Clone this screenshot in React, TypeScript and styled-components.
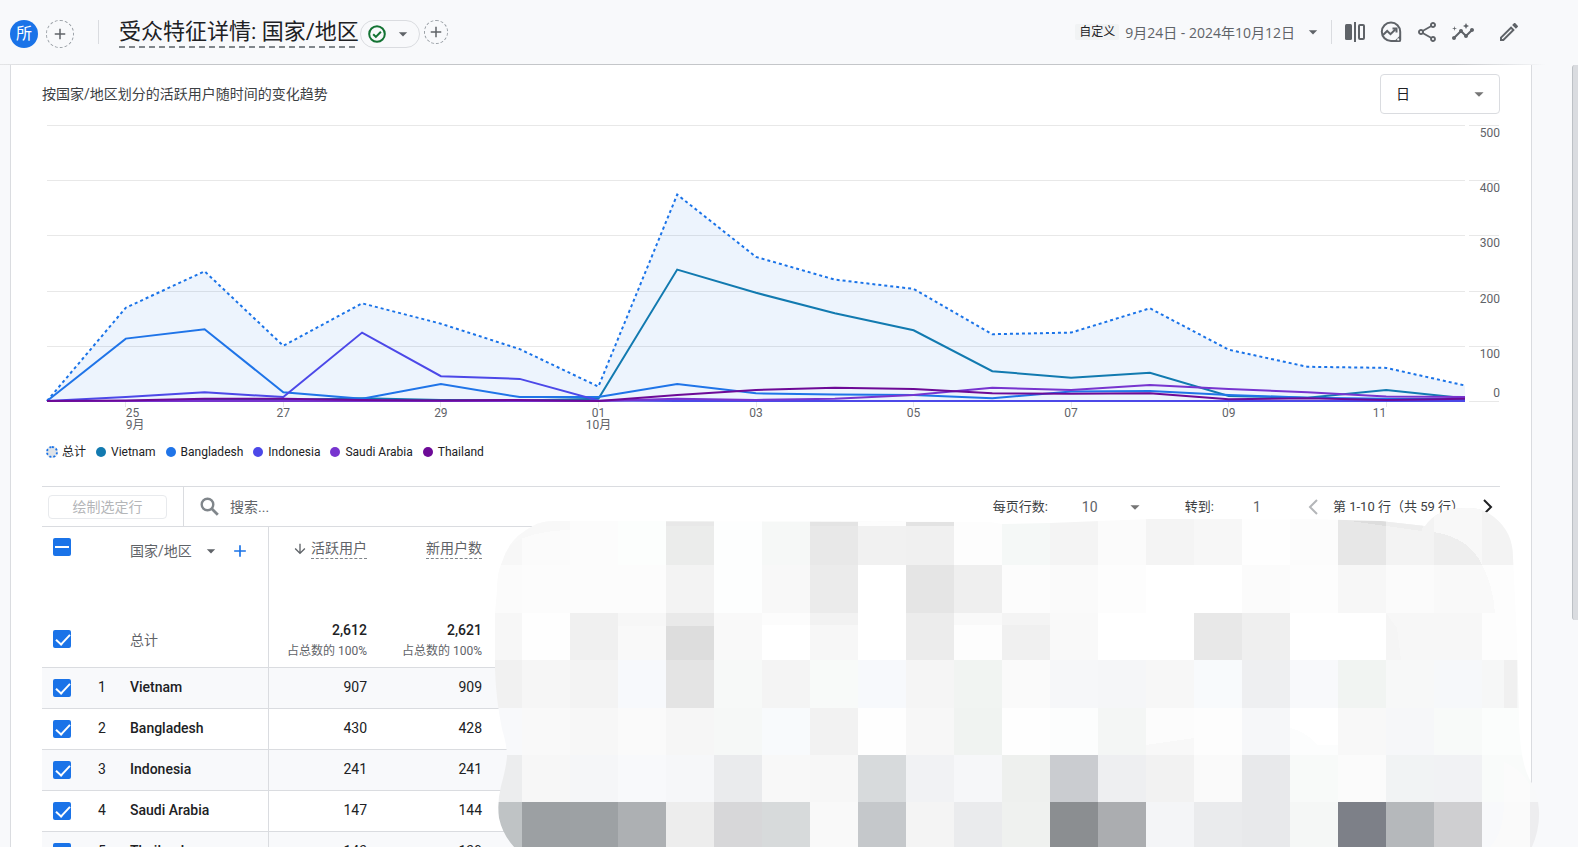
import React, { useLayoutEffect, useRef, useState } from "react";
import styled, { createGlobalStyle } from "styled-components";
import {
  MdAdd,
  MdArrowDownward,
  MdArrowDropDown,
  MdInsights,
  MdOutlineEdit,
  MdOutlineShare,
} from "react-icons/md";

const color = {
  text: "#202124",
  muted: "#5f6368",
  line: "#dadce0",
  grid: "#e8e8e8",
  page: "#f8f9fb",
  blue: "#1a73e8",
};

const GlobalStyle = createGlobalStyle`
  * { box-sizing: border-box; }
  body {
    margin: 0;
    background: ${color.page};
    color: ${color.text};
    font-family: Roboto, "Noto Sans CJK SC", sans-serif;
    font-size: 14px;
    line-height: 20px;
  }
  button, input, select { font: inherit; color: inherit; margin: 0; }
  button { cursor: pointer; }
`;

const Shell = styled.div`
  height: 100vh;
  display: flex;
  flex-direction: column;
  overflow: hidden;
`;

/* ---------- header ---------- */

const Header = styled.header`
  flex: none;
  display: flex;
  align-items: flex-start;
  height: 65px;
  padding: 20px 57px 0 10px;
  background:
    linear-gradient(90deg, #e4e5e7, #c4c6c9 8%, #c4c6c9 92%, ${color.page} 98%) bottom / 100% 1px no-repeat,
    ${color.page};
`;

const Avatar = styled.span`
  display: grid;
  place-items: center;
  width: 28px;
  height: 28px;
  border-radius: 50%;
  background: ${color.blue};
  color: #fff;
  font-size: 16px;
`;

const DashedButton = styled.button<{ $size: number }>`
  display: grid;
  place-items: center;
  width: ${(p) => p.$size}px;
  height: ${(p) => p.$size}px;
  padding: 0;
  border: 1px dashed #9aa0a6;
  border-radius: 50%;
  background: none;
  color: ${color.muted};
  font-size: 18px;
`;

const Divider = styled.span`
  width: 1px;
  height: 24px;
  background: ${color.line};
`;

const HeaderLeft = styled.div`
  display: flex;
  align-items: flex-start;
  flex: 1;
  min-width: 0;

  ${Avatar} { margin-right: 8px; }
  ${Divider} { margin: 0 20px 0 24px; }
`;

const Title = styled.h1`
  margin: 0 1px 0 0;
  height: 28px;
  font-size: 22px;
  font-weight: 400;
  line-height: 24px;
  white-space: nowrap;
  background: repeating-linear-gradient(90deg, #80868b 0 6px, transparent 6px 10px) bottom / 100% 2px no-repeat;
`;

const StatusButton = styled.button`
  display: flex;
  align-items: center;
  justify-content: space-between;
  width: 60px;
  height: 28px;
  margin-right: 4px;
  padding: 0 6px 0 7px;
  border: 1px solid ${color.line};
  border-radius: 14px;
  background: none;
  color: ${color.muted};
  font-size: 20px;
`;

const HeaderRight = styled.div`
  display: flex;
  align-items: center;
  height: 24px;
`;

const DateButton = styled.button`
  display: flex;
  align-items: center;
  padding: 0;
  border: 0;
  background: none;
  color: ${color.muted};
  white-space: nowrap;

  svg { margin: 0 8px; font-size: 20px; }
`;

const DateText = styled.span`
  padding-top: 2px;
  font-family: "Open Sans", "Noto Sans CJK SC", sans-serif;
`;

const Chip = styled.span`
  margin-right: 6px;
  padding: 0 4px;
  border-radius: 2px;
  background: #f1f3f4;
  color: ${color.text};
  font-size: 12px;
  line-height: 16px;
`;

const IconButton = styled.button<{ $gap?: number }>`
  display: grid;
  place-items: center;
  width: 24px;
  height: 24px;
  margin-left: ${(p) => p.$gap ?? 12}px;
  padding: 0;
  border: 0;
  background: none;
  color: ${color.muted};
  font-size: 24px;
`;

/* ---------- body ---------- */

const Body = styled.main`
  flex: 1;
  min-height: 0;
  display: flex;
  overflow: hidden;
`;

const Card = styled.section`
  flex: 1;
  min-width: 0;
  align-self: flex-start;
  margin: 0 40px 0 10px;
  padding: 9px 31px 0;
  border: solid ${color.line};
  border-width: 0 1px;
  background: #fff;
`;

const ScrollThumb = styled.div`
  flex: none;
  width: 6px;
  height: 71%;
  border-left: 1px solid #bdc1c6;
  border-radius: 3px 0 0 3px;
  background: ${color.line};
`;

const CardHead = styled.div`
  display: flex;
  justify-content: space-between;
  height: 40px;
`;

const CardTitle = styled.h2`
  margin: 0;
  color: #3c4043;
  font-size: 14px;
  font-weight: 400;
  line-height: 40px;
`;

const SelectBox = styled.label<{ $outlined?: boolean }>`
  display: flex;
  align-items: center;
  width: ${(p) => (p.$outlined ? 120 : 64)}px;
  height: ${(p) => (p.$outlined ? 40 : 24)}px;
  padding: ${(p) => (p.$outlined ? "0 9px 0 15px" : "0")};
  border: ${(p) => (p.$outlined ? `1px solid ${color.line}` : "0")};
  border-radius: 4px;
  color: ${(p) => (p.$outlined ? color.text : color.muted)};

  select {
    flex: 1;
    min-width: 0;
    padding: 0;
    border: 0;
    background: none;
    appearance: none;
  }
  svg { flex: none; font-size: 22px; color: #757575; }
`;

const ChartFrame = styled.div`
  height: 328px;

  svg { display: block; width: 100%; height: 100%; }
  text { font-size: 12px; fill: ${color.muted}; }
`;

const Legend = styled.ul`
  display: flex;
  gap: 10px;
  margin: 0 0 24px;
  padding: 0 0 0 5px;
  list-style: none;
  font-size: 12px;
`;

const LegendItem = styled.li`
  display: flex;
  align-items: center;
  gap: 5px;
`;

const Dot = styled.span<{ $color?: string }>`
  width: ${(p) => (p.$color ? 10 : 12)}px;
  height: ${(p) => (p.$color ? 10 : 12)}px;
  margin: ${(p) => (p.$color ? "0" : "0 -1px")};
  border-radius: 50%;
  background: ${(p) => p.$color ?? "#dfe3e8"};
  border: ${(p) => (p.$color ? "0" : `2px dotted ${color.blue}`)};
`;

/* ---------- table ---------- */

const TableArea = styled.div`
  position: relative;
`;

const Toolbar = styled.div`
  display: flex;
  align-items: center;
  height: 41px;
  border: solid ${color.line};
  border-width: 1px 0;
  color: #3c4043;
`;

const PlotCell = styled.div`
  display: flex;
  align-items: center;
  align-self: stretch;
  width: 142px;
  padding-left: 6px;
  border-right: 1px solid ${color.line};
`;

const PlotButton = styled.button`
  width: 119px;
  height: 24px;
  padding: 0;
  border: 1px solid #e8eaed;
  border-radius: 4px;
  background: none;
  color: #b4b6b9;
  line-height: 22px;
`;

const SearchBox = styled.label`
  display: flex;
  align-items: center;
  flex: 1;
  gap: 8px;
  padding-left: 14px;

  svg { color: #80868b; }
  input {
    width: 160px;
    padding: 0;
    border: 0;
    background: none;
    outline: 0;
  }
  input::placeholder { color: ${color.muted}; opacity: 1; }
`;

const Pager = styled.div`
  display: flex;
  align-items: center;
  font-size: 13px;

  ${SelectBox} { margin: 0 39px 0 34px; font-size: 14px; }
`;

const PageInput = styled.input`
  width: 16px;
  margin: 0 32px 0 39px;
  padding: 0;
  border: 0;
  background: none;
  color: ${color.muted};
  font-size: 14px;
`;

const PagerButton = styled.button`
  display: grid;
  place-items: center;
  width: 24px;
  height: 24px;
  padding: 0;
  border: 0;
  background: none;
  color: ${color.text};

  &:disabled { color: #b4b6b9; }
`;

const PageRange = styled.span`
  width: 131px;
  margin: 0 12px 0 8px;
  white-space: nowrap;
`;

const Table = styled.table`
  width: 100%;
  table-layout: fixed;
  border-collapse: separate;
  border-spacing: 0;

  th, td { padding: 0; font-weight: 400; text-align: left; }
`;

const Col = styled.col<{ $w?: number }>`
  width: ${(p) => (p.$w ? `${p.$w}px` : "auto")};
`;

const HeadRow = styled.tr`
  height: 86px;
  vertical-align: top;
  color: ${color.muted};

  && th { padding-top: 11px; }
`;

const Row = styled.tr<{ $total?: boolean; $shaded?: boolean }>`
  height: ${(p) => (p.$total ? 55 : 41)}px;
  background: ${(p) => (p.$shaded ? color.page : "#fff")};

  td, th { border-bottom: 1px solid ${color.line}; }
  &&& > :not(:first-child) { padding-bottom: ${(p) => (p.$total ? 0 : 2)}px; }
  &&& > :first-child { padding-bottom: ${(p) => (p.$total ? 2 : 0)}px; }
`;

const CheckCell = styled.td`
  && { padding-left: 11px; }
`;

const Check = styled.input.attrs({ type: "checkbox" })<{ $mixed?: boolean }>`
  display: block;
  position: relative;
  width: 18px;
  height: 18px;
  appearance: none;
  border: 2px solid ${color.muted};
  border-radius: 2px;

  &:checked { border: 0; background: ${color.blue}; }
  &:checked::after {
    content: "";
    position: absolute;
    ${(p) =>
      p.$mixed
        ? "left: 2px; top: 8px; width: 14px; height: 2px; background: #fff;"
        : "left: 6px; top: 1px; width: 6px; height: 12px; border: solid #fff; border-width: 0 2px 2px 0; transform: rotate(43deg);"}
  }
`;

const IndexCell = styled.td`
  && { padding-left: 8px; }
`;

const NameCell = styled.th<{ $strong?: boolean }>`
  border-right: 1px solid ${color.line};
  color: ${(p) => (p.$strong ? color.text : color.muted)};
  && { font-weight: ${(p) => (p.$strong ? 500 : 400)}; }
`;

const NumberCell = styled.td`
  && { padding-right: 16px; text-align: right; }
`;

const DimensionHead = styled.div`
  display: flex;
  align-items: center;
  height: 26px;

  select { padding: 0; border: 0; background: none; appearance: none; }
  > svg { margin-left: 9px; font-size: 20px; }
`;

const AddButton = styled.button`
  display: grid;
  place-items: center;
  width: 20px;
  height: 20px;
  margin-left: 9px;
  padding: 0;
  border: 0;
  background: none;
  color: ${color.blue};
  font-size: 20px;
`;

const MetricButton = styled.button`
  display: inline-flex;
  align-items: center;
  gap: 3px;
  padding: 0;
  border: 0;
  background: none;

  svg { font-size: 16px; }
  span { border-bottom: 1px dashed #80868b; }
`;

const TotalValue = styled.div`
  padding-top: 2px;
  font-weight: 500;
  line-height: 20px;
  color: ${color.text};
`;

const TotalShare = styled.div`
  font-size: 12px;
  line-height: 22px;
  color: ${color.muted};
`;

const Mosaic = styled.svg`
  position: absolute;
  top: 14px;
  left: 432px;
  width: calc(100% - 386px);
  height: 349px;
  pointer-events: none;
`;

/* ---------- data ---------- */

const totals = [0, 169, 235, 100, 177, 140, 94, 26, 374, 261, 220, 203, 121, 124, 168, 93, 62, 60, 28];

const series = [
  { name: "Vietnam", color: "#127ab0", values: [0, 0, 2, 2, 5, 2, 1, 4, 238, 196, 159, 128, 54, 42, 51, 9, 6, 20, 5] },
  { name: "Bangladesh", color: "#1f74e8", values: [0, 113, 130, 16, 4, 31, 7, 7, 31, 14, 12, 11, 5, 17, 18, 11, 6, 4, 3] },
  { name: "Indonesia", color: "#4c48e8", values: [0, 7, 16, 7, 124, 45, 40, 1, 0, 0, 0, 0, 0, 0, 0, 0, 0, 0, 0] },
  { name: "Saudi Arabia", color: "#7734cf", values: [0, 0, 0, 0, 0, 0, 0, 0, 4, 2, 4, 11, 24, 20, 29, 22, 16, 8, 7] },
  { name: "Thailand", color: "#6d0a97", values: [0, 1, 4, 4, 2, 1, 2, 0, 11, 20, 24, 22, 14, 13, 14, 3, 5, 2, 4] },
];

const dayLabels = [
  { day: 1, text: "25", month: "9月", anchor: "start" },
  { day: 3, text: "27", anchor: "middle" },
  { day: 5, text: "29", anchor: "middle" },
  { day: 7, text: "01", month: "10月", anchor: "middle" },
  { day: 9, text: "03", anchor: "middle" },
  { day: 11, text: "05", anchor: "middle" },
  { day: 13, text: "07", anchor: "middle" },
  { day: 15, text: "09", anchor: "middle" },
  { day: 17, text: "11", anchor: "end" },
] as const;

const rows = [
  ["Vietnam", 907, 909],
  ["Bangladesh", 430, 428],
  ["Indonesia", 241, 241],
  ["Saudi Arabia", 147, 144],
  ["Thailand", 143, 139],
] as const;

const mosaicEdges = [500, 565, 613, 660, 708, 755, 802, 849];
const mosaicTones = [
  "f7f7f7 fbfbfb fcfcfc fcfefd ebeceb fdfefe f6f8f7 e8e8e8 f1f1f1 f0f0f0 fdfdfd f5f8f7 f4f4f4 fbfbfb f4f4f4 f7f7f7 fefefe fcfcfc e7e7e7 f3f3f3 eeeeee f3f3f3 ffffff",
  "fbfbfb fcfcfc fcfcfc fcfcfc f3f3f3 fdfefe f8f8f8 ebebeb ffffff e5e5e5 efefef fcfcfc fafafa fdfdfd ffffff ffffff fbfbfb fdfdfd f7f7f7 fbfbfb f9f9f9 fdfdfd ffffff",
  "f7f7f7 fefefe f0f0f0 f9f9f9 dddddd f9f9f9 ffffff f7f7f7 ffffff ececec fdfdfd f0f0f0 f9f9f9 ffffff ffffff e8e8e8 efefef ffffff ffffff f7f7f7 f7f7f7 fdfdfd ffffff",
  "f1f1f1 f6f6f6 f3f3f3 f7f9fc e4e4e4 f7f9f8 f4f4f4 f8faf9 f7f9fc f5f5f5 f1f4f2 fafafa f6f7f9 f5f6f8 f7f7f7 f8fafc eeeff1 f8f9fb f1f4f2 f7f8f8 f6f8fa f6f7f7 ffffff",
  "f8f9fb f9f9f9 f7f7f7 fafafa f6f6f6 f6f8f7 f8fafc f2f2f2 fefefe f7f7f7 f0f3f1 fefefe fcfdfd f4f6f5 fcfcfc fdfdfd f6f7f9 ffffff f8f8f8 f6f7f9 f8faf9 fbfdfc ffffff",
  "ecedee f7f7f7 f5f6f8 f8f9fb f6f7f9 eaebed f8f8f8 f7f7f7 d7dadc f1f2f4 f6f7f9 eef0ee caccd0 eeeff1 f2f2f2 fafafa e8e9eb f8faf9 fbfbfb f1f3f4 f1f2f4 f9fbfa f8f9fa",
  "bfc3c5 9ca0a3 9da1a4 adb0b3 ededed d7d7d9 d7dadb f9f9f9 c5c8cb f4f4f4 eaebed eff1ef 8b8e91 abadb0 f4f5f7 eaebed e8e9eb f5f7f6 7d8088 b5b8bb cfcfd1 f8f9fb ededef",
].map((line) => line.split(" "));

/* ---------- parts ---------- */

function CompareIcon() {
  return (
    <svg width="24" height="24" viewBox="0 0 24 24" fill="currentColor" aria-hidden="true">
      <rect x="2" y="4" width="7" height="16" rx="1.5" />
      <rect x="11" y="2" width="2" height="20" />
      <rect x="16" y="5" width="5" height="14" rx="1" fill="none" stroke="currentColor" strokeWidth="2" />
    </svg>
  );
}

function TrendCircleIcon() {
  return (
    <svg width="24" height="24" viewBox="0 0 24 24" fill="none" stroke="currentColor" strokeWidth="2" aria-hidden="true">
      <path d="M12 21a9.2 9.2 0 1 1 9.2-9.2V20a1 1 0 0 1-1 1z" />
      <path d="M4 15l4.2-4 3.3 3.2 5-5" />
      <path d="M13.5 8.5h4v4" />
      <path d="M21.5 15v6.5H15z" fill="currentColor" stroke="none" />
      <circle cx="19.2" cy="19.4" r="1.1" fill="#f8f9fb" stroke="none" />
    </svg>
  );
}

function StatusIcon() {
  return (
    <svg width="18" height="18" viewBox="0 0 18 18" fill="none" stroke="#137333" strokeWidth="2" aria-hidden="true">
      <circle cx="9" cy="9" r="7.8" />
      <path d="M5.2 9.2l2.7 2.7 5-5.2" />
    </svg>
  );
}

function SearchIcon() {
  return (
    <svg width="24" height="24" viewBox="0 0 24 24" fill="none" stroke="currentColor" aria-hidden="true">
      <circle cx="9.5" cy="9.5" r="5.8" strokeWidth="2.4" />
      <path d="M13.8 13.8l6 6" strokeWidth="2.8" />
    </svg>
  );
}

function Chevron({ left }: { left?: boolean }) {
  return (
    <svg width="12" height="16" viewBox="0 0 12 16" fill="none" stroke="currentColor" strokeWidth="2" aria-hidden="true">
      <path d={left ? "M10 1L3 8l7 7" : "M2 1l7 7-7 7"} />
    </svg>
  );
}

function Chart() {
  const frame = useRef<HTMLDivElement>(null);
  const [width, setWidth] = useState(1458);

  useLayoutEffect(() => {
    const el = frame.current;
    if (!el) return;
    const update = () => setWidth(el.clientWidth);
    update();
    const observer = new ResizeObserver(update);
    observer.observe(el);
    return () => observer.disconnect();
  }, []);

  const left = 5;
  const right = width - 35;
  const base = 287;
  const x = (i: number) => left + ((right - left) * i) / 18;
  const y = (v: number) => base - v * 0.552;
  const points = (values: number[]) => values.map((v, i) => `${x(i).toFixed(1)},${y(v).toFixed(1)}`).join(" ");

  return (
    <ChartFrame ref={frame}>
      <svg role="img" aria-label="活跃用户趋势">
        {[0, 100, 200, 300, 400, 500].map((v) => {
          const lineY = Math.round(y(v)) + 0.5;
          return (
            <g key={v}>
              <path d={`M${left} ${lineY}H${right}M${width - 31} ${lineY}H${width - 1}`} stroke={color.grid} />
              <text x={width} y={v === 0 ? 283 : lineY + 11} textAnchor="end">
                {v}
              </text>
            </g>
          );
        })}
        {dayLabels.map((d) => (
          <g key={d.text}>
            <path d={`M${Math.floor(x(d.day)) + 0.5} 288v5`} stroke={color.grid} />
            <text x={x(d.day)} y="303" textAnchor={d.anchor}>
              {d.text}
            </text>
            {"month" in d && (
              <text x={x(d.day)} y="315" textAnchor={d.anchor}>
                {d.month}
              </text>
            )}
          </g>
        ))}
        <polygon
          points={`${left},${base} ${points(totals)} ${right},${base}`}
          fill={color.blue}
          fillOpacity="0.08"
        />
        <polyline points={points(totals)} fill="none" stroke={color.blue} strokeWidth="2" strokeDasharray="3 3" />
        {series.map((s) => (
          <polyline key={s.name} points={points(s.values)} fill="none" stroke={s.color} strokeWidth="2" />
        ))}
      </svg>
    </ChartFrame>
  );
}

function MosaicCover() {
  return (
    <Mosaic viewBox="474 500 1072 349" preserveAspectRatio="none" aria-hidden="true">
      <defs>
        <clipPath id="cover">
          <path d="M620 521H555Q541 521 533 526Q509 538 502 562Q497 572 497 590L495 613V670Q496 700 502 729Q507 745 507 757Q506 768 501 786Q497 802 499 818Q503 836 516 849H1531Q1540 830 1539 810Q1538 792 1529 778Q1520 760 1519 720L1517 640L1513 557Q1513 532 1494 517Q1482 507 1466 508Q1437 508 1425 526L1380 521L1310 519H1150L1050 523L1002 524L990 522Z" />
        </clipPath>
      </defs>
      <g clipPath="url(#cover)" shapeRendering="crispEdges">
        {mosaicTones.map((line, r) =>
          line.map((tone, c) => (
            <rect
              key={`${r}-${c}`}
              x={474 + c * 48}
              y={mosaicEdges[r]}
              width={48}
              height={mosaicEdges[r + 1] - mosaicEdges[r]}
              fill={`#${tone}`}
            />
          ))
        )}
        <rect x="666" y="522" width="48" height="4" fill="#e8e8e8" />
        <rect x="810" y="522" width="48" height="4" fill="#e4e4e4" />
        <rect x="906" y="522" width="48" height="4" fill="#e3e3e3" />
        <rect x="858" y="520" width="48" height="6" fill="#fdfdfd" />
        <rect x="618" y="613" width="48" height="13" fill="#f7f7f7" />
        <rect x="666" y="613" width="48" height="13" fill="#e9e9e9" />
        <rect x="762" y="613" width="48" height="12" fill="#fcfcfc" />
        <rect x="810" y="613" width="48" height="12" fill="#f2f2f2" />
        <rect x="954" y="613" width="48" height="12" fill="#f9f9f9" />
        <rect x="1002" y="613" width="48" height="12" fill="#f4f4f4" />
        <path d="M498 565Q505 532 570 530V517H490V565Z" fill="#f8f8f8" />
        <path d="M1350 521L1386 526V521Z" fill="#dddddd" />
        <path d="M1386 526L1422 531L1425 515H1386Z" fill="#eeeeee" />
        <path d="M1434 500V532Q1470 538 1482 565V500Z" fill="#f8f8f8" />
        <path d="M1482 565Q1493 585 1495 613H1482Z" fill="#f9f9f9" />
        <path d="M1386 613L1397 628L1401 660H1386Z" fill="#f5f5f5" />
        <path d="M1504 660H1517V708H1504Z" fill="#f0f0f0" />
        <path d="M1146 745L1194 738V755H1146Z" fill="#f8f8f8" />
        <path d="M1290 728Q1306 732 1318 745H1338V755H1290Z" fill="#fcfdfd" />
        <path d="M1504 762Q1522 770 1530 785V802H1504Z" fill="#fbfbfb" />
        <path d="M1504 802H1530V849H1488Q1504 835 1504 802Z" fill="#fafafa" />
      </g>
    </Mosaic>
  );
}

export default function App() {
  return (
    <Shell>
      <GlobalStyle />
      <Header>
        <HeaderLeft>
          <Avatar>所</Avatar>
          <DashedButton $size={28} aria-label="添加比较">
            <MdAdd />
          </DashedButton>
          <Divider />
          <Title>受众特征详情: 国家/地区</Title>
          <StatusButton aria-label="数据状态">
            <StatusIcon />
            <MdArrowDropDown />
          </StatusButton>
          <DashedButton $size={24} aria-label="添加过滤条件">
            <MdAdd />
          </DashedButton>
        </HeaderLeft>
        <HeaderRight>
          <DateButton>
            <Chip>自定义</Chip>
            <DateText>9月24日 - 2024年10月12日</DateText>
            <MdArrowDropDown />
          </DateButton>
          <Divider />
          <IconButton $gap={11} aria-label="比较">
            <CompareIcon />
          </IconButton>
          <IconButton aria-label="数据分析">
            <TrendCircleIcon />
          </IconButton>
          <IconButton aria-label="分享">
            <MdOutlineShare />
          </IconButton>
          <IconButton aria-label="洞察">
            <MdInsights />
          </IconButton>
          <IconButton $gap={22} aria-label="修改">
            <MdOutlineEdit />
          </IconButton>
        </HeaderRight>
      </Header>

      <Body>
        <Card>
          <CardHead>
            <CardTitle>按国家/地区划分的活跃用户随时间的变化趋势</CardTitle>
            <SelectBox $outlined>
              <select aria-label="时间粒度">
                <option>日</option>
              </select>
              <MdArrowDropDown />
            </SelectBox>
          </CardHead>
          <Chart />
          <Legend>
            <LegendItem>
              <Dot />
              总计
            </LegendItem>
            {series.map((s) => (
              <LegendItem key={s.name}>
                <Dot $color={s.color} />
                {s.name}
              </LegendItem>
            ))}
          </Legend>

          <TableArea>
            <Toolbar>
              <PlotCell>
                <PlotButton disabled>绘制选定行</PlotButton>
              </PlotCell>
              <SearchBox>
                <SearchIcon />
                <input type="text" placeholder="搜索..." aria-label="搜索" />
              </SearchBox>
              <Pager>
                <label htmlFor="page-size">每页行数:</label>
                <SelectBox>
                  <select id="page-size">
                    <option>10</option>
                  </select>
                  <MdArrowDropDown />
                </SelectBox>
                <label htmlFor="page-no">转到:</label>
                <PageInput id="page-no" type="text" defaultValue="1" />
                <PagerButton disabled aria-label="上一页">
                  <Chevron left />
                </PagerButton>
                <PageRange>第 1-10 行（共 59 行）</PageRange>
                <PagerButton aria-label="下一页">
                  <Chevron />
                </PagerButton>
              </Pager>
            </Toolbar>

            <Table>
              <colgroup>
                <Col $w={48} />
                <Col $w={40} />
                <Col $w={139} />
                <Col $w={114} />
                <Col $w={115} />
                <Col />
              </colgroup>
              <thead>
                <HeadRow>
                  <CheckCell as="th">
                    <Check $mixed defaultChecked aria-label="选择所有行" />
                  </CheckCell>
                  <th />
                  <NameCell scope="col">
                    <DimensionHead>
                      <select aria-label="维度">
                        <option>国家/地区</option>
                      </select>
                      <MdArrowDropDown />
                      <AddButton aria-label="添加维度">
                        <MdAdd />
                      </AddButton>
                    </DimensionHead>
                  </NameCell>
                  <NumberCell as="th" scope="col">
                    <MetricButton>
                      <MdArrowDownward />
                      <span>活跃用户</span>
                    </MetricButton>
                  </NumberCell>
                  <NumberCell as="th" scope="col">
                    <MetricButton>
                      <span>新用户数</span>
                    </MetricButton>
                  </NumberCell>
                  <th />
                </HeadRow>
              </thead>
              <tbody>
                <Row $total>
                  <CheckCell>
                    <Check defaultChecked aria-label="总计" />
                  </CheckCell>
                  <td />
                  <NameCell scope="row">总计</NameCell>
                  {["2,612", "2,621"].map((v) => (
                    <NumberCell key={v}>
                      <TotalValue>{v}</TotalValue>
                      <TotalShare>占总数的 100%</TotalShare>
                    </NumberCell>
                  ))}
                  <td />
                </Row>
                {rows.map(([name, active, fresh], i) => (
                  <Row key={name} $shaded={i % 2 === 0}>
                    <CheckCell>
                      <Check defaultChecked aria-label={name} />
                    </CheckCell>
                    <IndexCell>{i + 1}</IndexCell>
                    <NameCell scope="row" $strong>
                      {name}
                    </NameCell>
                    <NumberCell>{active}</NumberCell>
                    <NumberCell>{fresh}</NumberCell>
                    <td />
                  </Row>
                ))}
              </tbody>
            </Table>
            <MosaicCover />
          </TableArea>
        </Card>
        <ScrollThumb />
      </Body>
    </Shell>
  );
}
